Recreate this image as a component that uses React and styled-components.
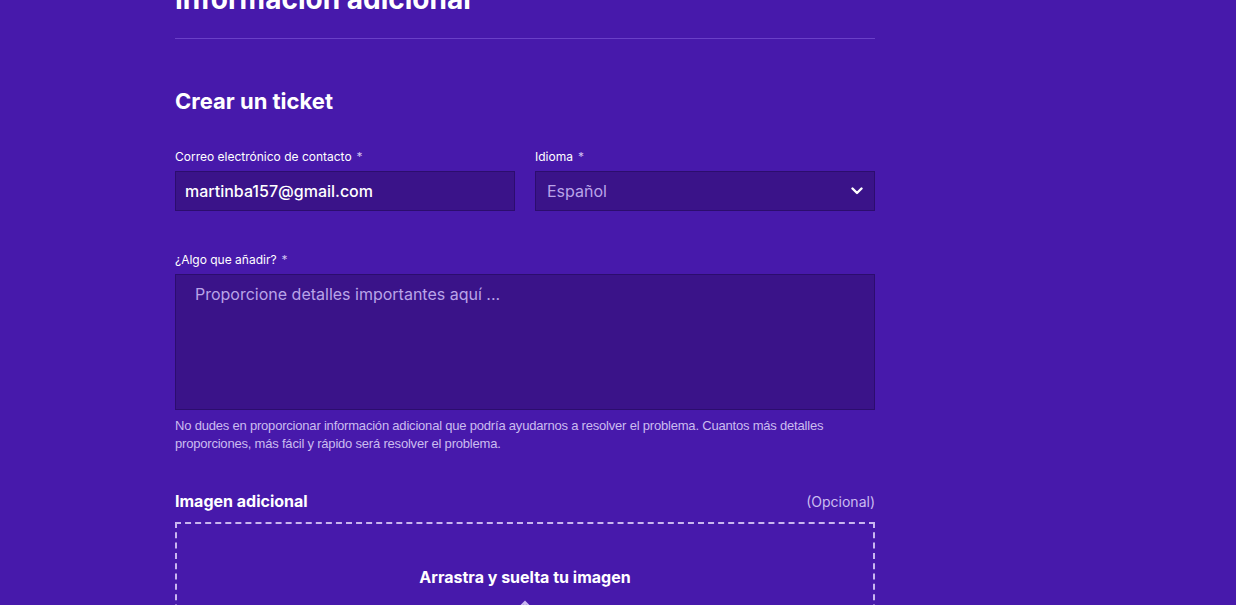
import React from "react";
import styled, { createGlobalStyle } from "styled-components";

const Global = createGlobalStyle`
  html, body { margin: 0; padding: 0; background: #4719ab; }
  body { font-family: Inter, "Liberation Sans", sans-serif; color: #fff; overflow: hidden; }
  * { box-sizing: border-box; }
`;

const Page = styled.div`
  width: 700px;
  margin-left: 175px;
  margin-top: -20px;
`;

const SectionTitle = styled.h2`
  margin: 0;
  font-size: 28px;
  font-weight: 700;
  line-height: 38px;
  letter-spacing: 0;
  padding-bottom: 20px;
  border-bottom: 1px solid #6a40c8;
`;

const FormTitle = styled.h3`
  margin: 48px 0 0;
  font-size: 22px;
  font-weight: 700;
  line-height: 28px;
`;

const Row = styled.div`
  display: grid;
  grid-template-columns: 1fr 1fr;
  gap: 20px;
  margin-top: 34px;
`;

const Field = styled.div`
  display: flex;
  flex-direction: column;
  margin-top: ${(p) => p.$top || 0}px;
`;

const Label = styled.label`
  font-size: 12px;
  line-height: 16px;
  color: #fff;
  margin-bottom: 6px;
  span { color: #cfc0f0; margin-left: 5px; }
`;

const Input = styled.div`
  height: 40px;
  background: #3a1389;
  border: 1px solid #2c0d6e;
  display: flex;
  align-items: center;
  justify-content: space-between;
  padding: 0 ${(p) => p.$pad || 9}px;
  font-size: 16px;
  color: ${(p) => (p.$muted ? "#b9a3e8" : "#fff")};
  font-weight: ${(p) => (p.$muted ? 400 : 500)};
`;

const TextArea = styled.div`
  height: 136px;
  background: #3a1389;
  border: 1px solid #2c0d6e;
  padding: 9px 19px;
  font-size: 16px;
  line-height: 20px;
  color: #b9a3e8;
`;

const Help = styled.p`
  margin: 7px 0 0;
  font-family: "Liberation Sans", sans-serif;
  font-size: 13px;
  line-height: 18px;
  color: #cbbcf0;
  letter-spacing: -0.2px;
`;

const UploadHead = styled.div`
  display: flex;
  justify-content: space-between;
  align-items: baseline;
  margin-top: 38px;
`;

const UploadTitle = styled.div`
  font-size: 16px;
  font-weight: 700;
`;

const Optional = styled.div`
  font-size: 14px;
  color: #cbbcf0;
`;

const Drop = styled.div`
  margin-top: 11px;
  height: 140px;
  border: 2px dashed #c9b6f0;
  display: flex;
  flex-direction: column;
  align-items: center;
  padding-top: 43px;
`;

const DropText = styled.div`
  font-size: 16px;
  font-weight: 700;
  line-height: 20px;
`;

const DropIcon = styled.svg`
  margin-top: 13px;
`;

export default function App() {
  return (
    <>
      <Global />
      <Page>
        <SectionTitle>Información adicional</SectionTitle>
        <FormTitle>Crear un ticket</FormTitle>
        <Row>
          <Field>
            <Label>Correo electrónico de contacto<span>*</span></Label>
            <Input>martinba157@gmail.com</Input>
          </Field>
          <Field>
            <Label>Idioma<span>*</span></Label>
            <Input $muted $pad={11}>
              Español
              <svg width="12" height="8" viewBox="0 0 12 8">
                <path d="M1.5 1.5 L6 6 L10.5 1.5" fill="none" stroke="#fff" strokeWidth="2.4" strokeLinecap="round" strokeLinejoin="round" />
              </svg>
            </Input>
          </Field>
        </Row>
        <Field $top={41}>
          <Label>¿Algo que añadir?<span>*</span></Label>
          <TextArea>Proporcione detalles importantes aquí ...</TextArea>
        </Field>
        <Help>
          No dudes en proporcionar información adicional que podría ayudarnos a resolver el problema. Cuantos más detalles proporciones, más fácil y rápido será resolver el problema.
        </Help>
        <UploadHead>
          <UploadTitle>Imagen adicional</UploadTitle>
          <Optional>(Opcional)</Optional>
        </UploadHead>
        <Drop>
          <DropText>Arrastra y suelta tu imagen</DropText>
          <DropIcon width="20" height="20" viewBox="0 0 20 20">
            <path d="M10 2 L10 16 M5 7 L10 2 L15 7" fill="none" stroke="#c9b6f0" strokeWidth="2" />
          </DropIcon>
        </Drop>
      </Page>
    </>
  );
}
